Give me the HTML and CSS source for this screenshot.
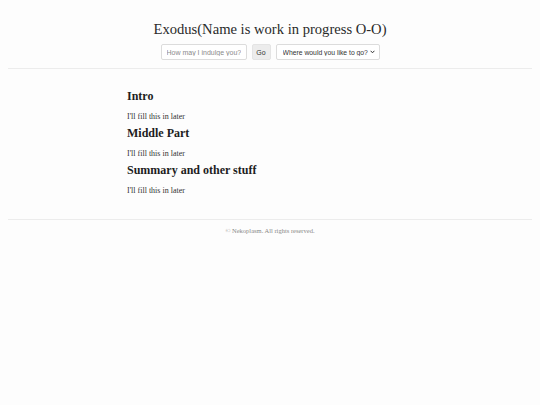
FILE: index.html
```html
<!DOCTYPE html>
<html lang="en">
<head>
<meta charset="utf-8">
<title>Exodus</title>
<link rel="stylesheet" href="styles.css">
</head>
<body>
<header class="site-header">
  <h1 class="site-title">Exodus(Name is work in progress O-O)</h1>
  <form class="controls">
    <input class="search" type="text" placeholder="How may I indulge you?">
    <button class="go" type="button">Go</button>
    <span class="select-wrap">
      <select class="nav-select">
        <option>Where would you like to go?</option>
      </select>
      <svg class="chevron" width="5" height="4" viewBox="0 0 5 4" aria-hidden="true"><path d="M0.6 0.8 L2.5 2.8 L4.4 0.8" fill="none" stroke="#333" stroke-width="1"/></svg>
    </span>
  </form>
</header>
<main class="content">
  <section class="part">
    <h2 class="part-title">Intro</h2>
    <p class="part-text">I'll fill this in later</p>
  </section>
  <section class="part">
    <h2 class="part-title">Middle Part</h2>
    <p class="part-text">I'll fill this in later</p>
  </section>
  <section class="part">
    <h2 class="part-title">Summary and other stuff</h2>
    <p class="part-text">I'll fill this in later</p>
  </section>
</main>
<footer class="site-footer">
  <p class="copyright">© Nekoplasm. All rights reserved.</p>
</footer>
</body>
</html>
```
FILE: styles.css
```css
html, body {
  background: #fdfdfd;
}
body {
  margin: 8px;
  font-family: "Liberation Serif", "Times New Roman", serif;
  color: #222;
}
.site-header {
  border-bottom: 1px solid #ececec;
  padding-top: 12px;
  padding-bottom: 8px;
  text-align: center;
}
.site-title {
  margin: 0;
  font-size: 14.6px;
  font-weight: normal;
  line-height: 18px;
  color: #2a2a2a;
}
.controls {
  margin-top: 6px;
  display: flex;
  justify-content: center;
  gap: 5px;
}
.search, .go, .nav-select {
  font-family: "Liberation Sans", Arial, sans-serif;
  font-size: 7px;
  height: 16px;
  box-sizing: border-box;
  border: 1px solid #dcdcdc;
  border-radius: 2px;
  background: #fff;
  color: #333;
}
.search {
  width: 86px;
  padding: 0 5px;
}
.search::placeholder {
  color: #8a8a8a;
}
.go {
  width: 19px;
  padding: 0;
  background: #ececec;
  border-color: #e4e4e4;
}
.select-wrap {
  position: relative;
  display: block;
}
.nav-select {
  display: block;
  width: 104px;
  padding: 0 8px 0 6px;
  font-size: 6.8px;
  appearance: none;
  -webkit-appearance: none;
}
.chevron {
  position: absolute;
  right: 5px;
  top: 6px;
  pointer-events: none;
}
.content {
  padding: 20px 119px 19px;
  border-bottom: 1px solid #ececec;
}
.part {
  margin-bottom: 3px;
}
.part-title {
  margin: 0;
  font-size: 12px;
  line-height: 14px;
  font-weight: bold;
  color: #1e1e1e;
}
.part-text {
  margin: 8px 0 0;
  font-size: 8px;
  line-height: 12px;
  color: #333;
}
.site-footer {
  text-align: center;
}
.copyright {
  margin: 7px 0;
  font-size: 6.5px;
  color: #888;
}
```
